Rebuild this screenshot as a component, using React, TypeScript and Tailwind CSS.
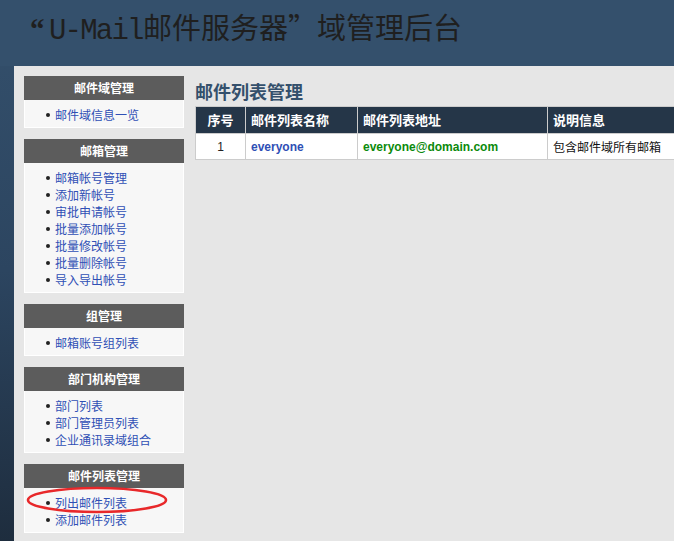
import React from "react";

const sections: { title: string; items: string[] }[] = [
  { title: "邮件域管理", items: ["邮件域信息一览"] },
  {
    title: "邮箱管理",
    items: ["邮箱帐号管理", "添加新帐号", "审批申请帐号", "批量添加帐号", "批量修改帐号", "批量删除帐号", "导入导出帐号"],
  },
  { title: "组管理", items: ["邮箱账号组列表"] },
  { title: "部门机构管理", items: ["部门列表", "部门管理员列表", "企业通讯录域组合"] },
  { title: "邮件列表管理", items: ["列出邮件列表", "添加邮件列表"] },
];

export default function App() {
  return (
    <div
      className="relative w-[674px] h-[541px] overflow-hidden bg-[linear-gradient(180deg,#34506c_0%,#2c4560_50%,#1e2d3e_100%)]"
      style={{ fontFamily: '"Noto Sans CJK SC", "Liberation Sans", sans-serif' }}
    >
      <div className="h-[66px] bg-[#34506c] pl-[30px] pt-[7px]">
        <div className="flex items-baseline text-[29px] leading-[38px] text-[#1f1f1f] whitespace-nowrap">
          <span className="font-['Liberation_Serif'] font-bold w-[19px] shrink-0">“</span>
          <span className="font-['Liberation_Mono'] tracking-[-1.8px] w-[94px] shrink-0">U-Mail</span>
          <span>邮件服务器”域管理后台</span>
        </div>
      </div>
      <div className="ml-[14px] h-[475px] bg-[#e6e6e6] flex pl-[10px] pt-[10px] gap-[11px]">
        <div className="w-[160px] flex flex-col gap-[11px] shrink-0">
          {sections.map((s) => (
            <div key={s.title}>
              <div className="h-[24px] bg-[#5c5c5c] text-white text-[12px] font-bold flex items-center justify-center">
                {s.title}
              </div>
              <ul className="bg-[#f7f7f7] border border-white border-t-0 pt-[6px] pb-[4px] pl-[21px]">
                {s.items.map((it) => (
                  <li key={it} className="flex items-center h-[17px] text-[12px] text-[#2f4fb5]">
                    <span className="w-[4px] h-[4px] rounded-full bg-[#222] mr-[5px]" />
                    <span>{it}</span>
                  </li>
                ))}
              </ul>
            </div>
          ))}
        </div>
        <div className="flex-1 min-w-0">
          <div className="text-[18px] font-bold text-[#34506c] h-[30px] leading-[28px] pt-[1px]">邮件列表管理</div>
          <table className="w-[560px] border-collapse text-[12px] border border-[#cccccc]">
            <thead>
              <tr className="h-[27px] bg-[#253648] text-white font-bold text-[13px]">
                <th className="w-[50px] border border-[#cccccc] text-center font-bold">序号</th>
                <th className="w-[112px] border border-[#cccccc] text-left pl-[5px] font-bold">邮件列表名称</th>
                <th className="w-[190px] border border-[#cccccc] text-left pl-[5px] font-bold">邮件列表地址</th>
                <th className="border border-[#cccccc] text-left pl-[5px] font-bold">说明信息</th>
              </tr>
            </thead>
            <tbody>
              <tr className="h-[26px] bg-white">
                <td className="border border-[#cccccc] text-center text-[#222] font-['Liberation_Sans']">1</td>
                <td className="border border-[#cccccc] pl-[5px] text-[#2f4fb5] font-bold font-['Liberation_Sans']">everyone</td>
                <td className="border border-[#cccccc] pl-[5px] text-[#0b8a0b] font-bold font-['Liberation_Sans']">everyone@domain.com</td>
                <td className="border border-[#cccccc] pl-[5px] text-[#111]">包含邮件域所有邮箱</td>
              </tr>
            </tbody>
          </table>
        </div>
      </div>
      <svg className="absolute left-[26px] top-[486px]" width="144" height="28" viewBox="0 0 144 28">
        <ellipse cx="71" cy="14" rx="69" ry="12" fill="none" stroke="#e8282a" strokeWidth="2.6" />
      </svg>
    </div>
  );
}
